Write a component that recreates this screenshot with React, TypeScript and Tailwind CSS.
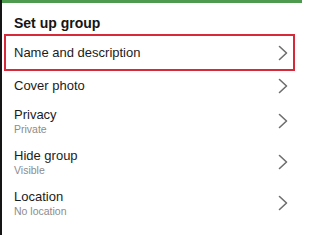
import React from "react";

const ROWS = [
  { title: "Name and description", highlighted: true },
  { title: "Cover photo" },
  { title: "Privacy", sub: "Private" },
  { title: "Hide group", sub: "Visible" },
  { title: "Location", sub: "No location" },
];

function Chevron() {
  return (
    <svg width="10" height="16" viewBox="0 0 10 16" fill="none" className="shrink-0">
      <polyline
        points="1.5,1.5 8.5,8 1.5,14.5"
        stroke="#6e6e6e"
        strokeWidth="1.6"
        strokeLinecap="round"
        strokeLinejoin="round"
      />
    </svg>
  );
}

export default function App() {
  return (
    <div className="flex h-[235px] w-[302px] overflow-hidden bg-white font-['Liberation_Sans',Arial,sans-serif]">
      {/* dark edge on the left */}
      <div className="w-[2px] shrink-0 bg-[#151515]" />

      <div className="flex flex-1 flex-col">
        {/* green top bar */}
        <div className="h-[3px] bg-[#4e9b4f]" />

        <h2 className="mt-[11px] pl-[12px] text-[14px] font-bold leading-[18px] text-[#151515]">Set up group</h2>

        <div className="mt-[4px] flex flex-col">
          {ROWS.map((r) => (
            <div
              key={r.title}
              className={
                r.sub
                  ? "relative flex h-[41px] items-center justify-between pb-[3px] pl-[12px] pr-[14px]"
                  : "relative flex h-[33px] items-center justify-between pl-[12px] pr-[14px]"
              }
            >
              <div className="flex flex-col">
                <span className="text-[13px] leading-[16px] text-[#1b1b1b]">{r.title}</span>
                {r.sub && <span className="text-[10.5px] leading-[13px] text-[#8c8c8c]">{r.sub}</span>}
              </div>
              <Chevron />
              {r.highlighted && (
                <div className="pointer-events-none absolute -top-[2px] -bottom-[2px] left-[2px] right-[7px] border-2 border-[#d62a3b]" />
              )}
            </div>
          ))}
        </div>
      </div>
    </div>
  );
}
